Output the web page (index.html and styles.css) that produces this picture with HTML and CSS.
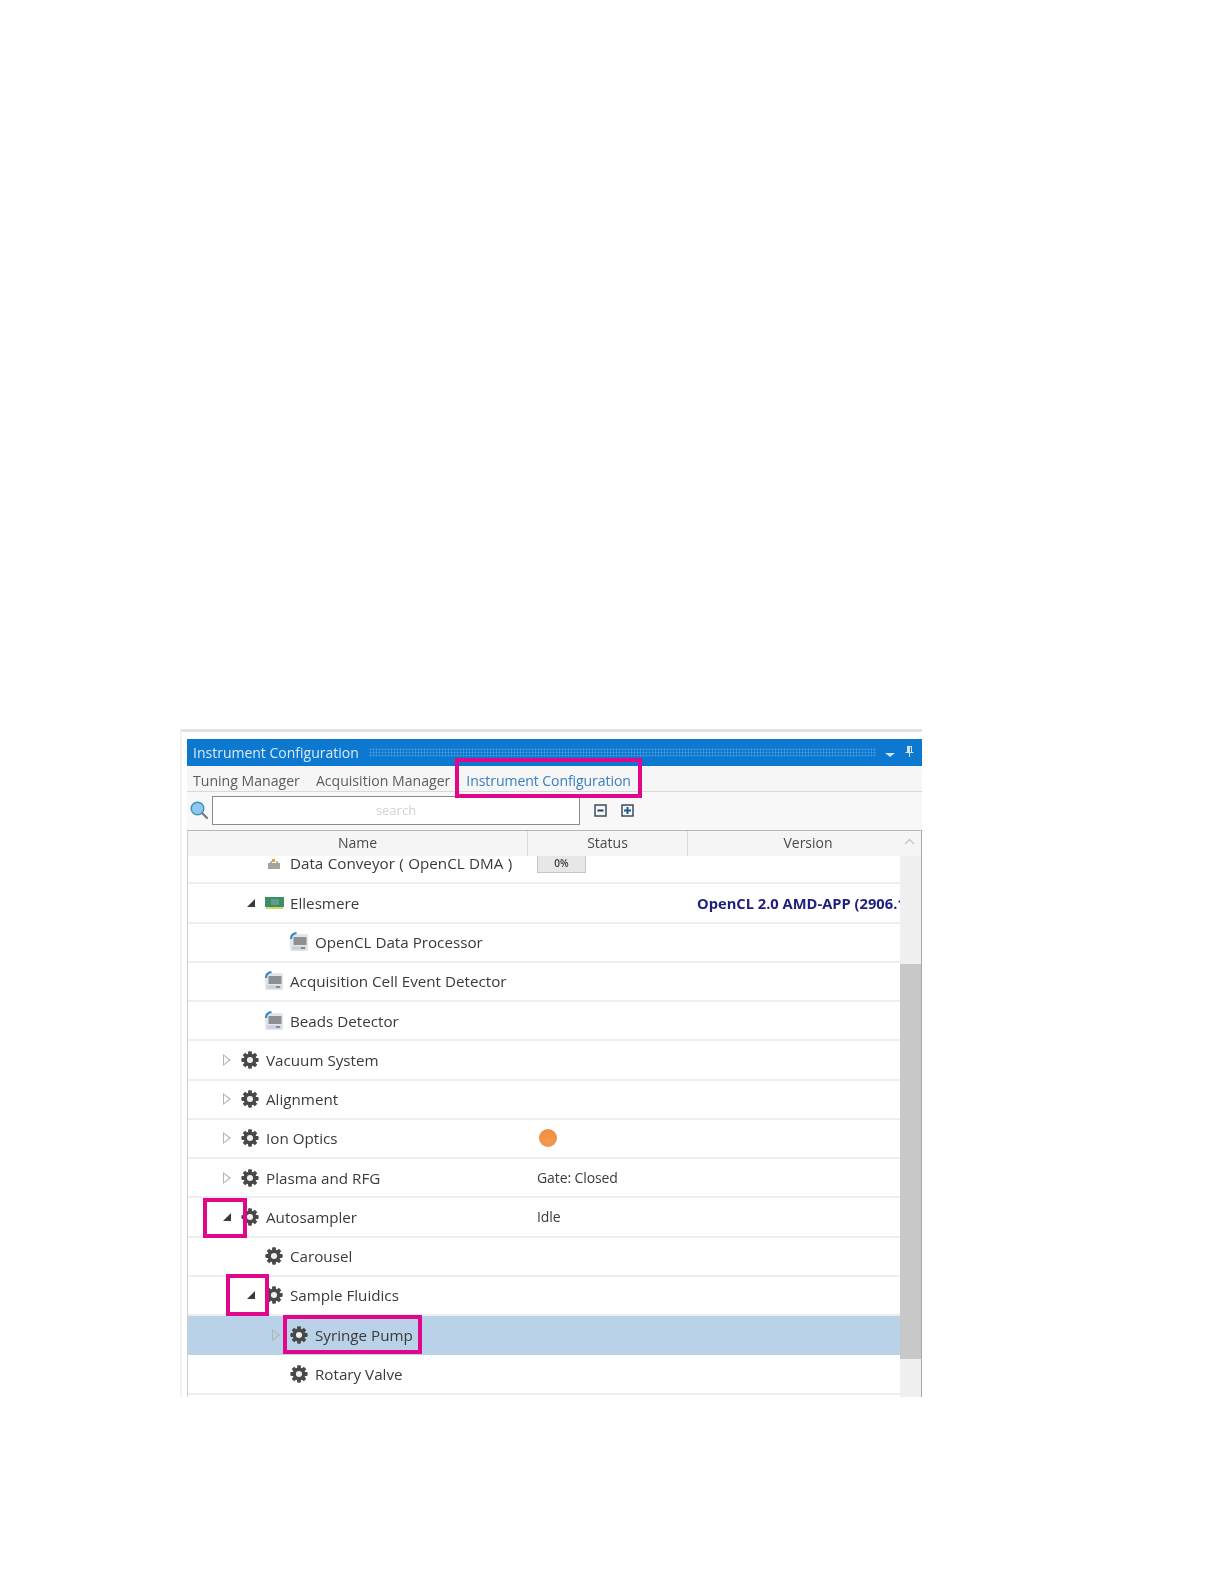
FILE: index.html
```html
<!DOCTYPE html>
<html lang="en">
<head>
<meta charset="utf-8">
<title>Instrument Configuration</title>
<link rel="stylesheet" href="styles.css">
</head>
<body>
<svg class="defs" width="0" height="0" aria-hidden="true">
  <symbol id="gear" viewBox="0 0 20 20">
    <g fill="#484848">
      <rect x="7.900" y="0.400" width="4.200" height="19.200" rx="0.900"/>
      <rect x="7.900" y="0.400" width="4.200" height="19.200" rx="0.900" transform="rotate(45 10 10)"/>
      <rect x="7.900" y="0.400" width="4.200" height="19.200" rx="0.900" transform="rotate(90 10 10)"/>
      <rect x="7.900" y="0.400" width="4.200" height="19.200" rx="0.900" transform="rotate(135 10 10)"/>
      <circle cx="10" cy="10" r="7.200"/>
    </g>
    <circle cx="10" cy="10" r="3.400" fill="#f0f0f0"/>
  </symbol>
  <symbol id="detector" viewBox="0 0 20 20">
    <rect x="1" y="2" width="18" height="17" rx="1.5" fill="#e2e6ea"/>
    <rect x="4.500" y="5" width="13" height="8" fill="#8d9093"/>
    <rect x="3" y="14.500" width="14" height="3" fill="#c3ced8"/>
    <rect x="12" y="15.200" width="4" height="1.600" fill="#6f7f8e"/>
    <path d="M2 7 C2 3.500 4 1.600 7.500 1" fill="none" stroke="#2c86c8" stroke-width="2"/>
  </symbol>
</svg>

<main class="frame">
  <section class="panel">
    <header class="titlebar">
      <span class="title">Instrument Configuration</span>
      <span class="grip"></span>
      <span class="caret-down"></span>
      <svg class="pin" width="9" height="12" viewBox="0 0 9 12"><path d="M2 1h5v6h1.500v1H5v4H4V8H.5V7H2z" fill="#cfe3f5"/><path d="M5 2h1v5H5z" fill="#0c78cf"/></svg>
    </header>

    <nav class="tabs">
      <span class="tab">Tuning Manager</span>
      <span class="tab">Acquisition Manager</span>
      <span class="tab tab-active">Instrument Configuration</span>
    </nav>

    <div class="toolbar">
      <svg class="search-icon" width="19" height="19" viewBox="0 0 19 19">
        <path d="M11.500 11.500l5.500 5.500" stroke="#777" stroke-width="2.200" stroke-linecap="round"/>
        <circle cx="7.500" cy="7.500" r="6.300" fill="#8cc8ee" stroke="#3d8fc4" stroke-width="1.400"/>
      </svg>
      <div class="search-box">search</div>
      <svg class="tool-icon" width="13" height="13" viewBox="0 0 13 13">
        <rect x="1" y="1" width="11" height="11" fill="#f4f6f8" stroke="#3f4a58" stroke-width="1.500"/>
        <path d="M3.500 6.500h6" stroke="#27405c" stroke-width="2"/>
      </svg>
      <svg class="tool-icon" width="13" height="13" viewBox="0 0 13 13">
        <rect x="1" y="1" width="11" height="11" fill="#f4f6f8" stroke="#3f4a58" stroke-width="1.500"/>
        <path d="M3 6.500h7M6.500 3v7" stroke="#1c5a94" stroke-width="2"/>
      </svg>
    </div>

    <div class="grid-wrap">
      <div class="grid-head">
        <div class="hcell hcell-name">Name</div>
        <div class="hcell hcell-status">Status</div>
        <div class="hcell hcell-version">Version</div>
        <svg class="chevron-up" width="11" height="7" viewBox="0 0 11 7"><path d="M1 6l4.500-4.500L10 6" fill="none" stroke="#c8c8c8" stroke-width="1.400"/></svg>
      </div>

      <div class="grid-body">
        <div class="tree">
          <div class="row row-cut">
            <div class="name level-1">
              <span class="arrow"></span>
              <span class="icon">
                <svg width="16" height="16" viewBox="0 0 16 16"><path d="M6 3h3v3H6z" fill="#d9a24f"/><path d="M2 7h12v6H2z" fill="#a9a29a"/><path d="M4 5h2v2H4zM10 5h2v2h-2z" fill="#c9b28e"/></svg>
              </span>
              <span class="label label-wide">Data Conveyor ( OpenCL DMA )</span>
            </div>
            <div class="status"><span class="progress">0%</span></div>
            <div class="version"></div>
          </div>

          <div class="row">
            <div class="name level-1">
              <span class="arrow"><span class="tri-open"></span></span>
              <span class="icon">
                <svg width="19" height="14" viewBox="0 0 19 14"><path d="M0 1h19v10H0z" fill="#3c8f63"/><path d="M6 3h8v6H6z" fill="#5f9c8e"/><path d="M1 11h17v2H1z" fill="#dcd35c"/></svg>
              </span>
              <span class="label">Ellesmere</span>
            </div>
            <div class="status"></div>
            <div class="version version-bold">OpenCL 2.0 AMD-APP (2906.10)</div>
          </div>

          <div class="row">
            <div class="name level-2">
              <span class="arrow"></span>
              <span class="icon"><svg width="20" height="20"><use href="#detector"/></svg></span>
              <span class="label">OpenCL Data Processor</span>
            </div>
            <div class="status"></div><div class="version"></div>
          </div>

          <div class="row">
            <div class="name level-1">
              <span class="arrow"></span>
              <span class="icon"><svg width="20" height="20"><use href="#detector"/></svg></span>
              <span class="label">Acquisition Cell Event Detector</span>
            </div>
            <div class="status"></div><div class="version"></div>
          </div>

          <div class="row">
            <div class="name level-1">
              <span class="arrow"></span>
              <span class="icon"><svg width="20" height="20"><use href="#detector"/></svg></span>
              <span class="label">Beads Detector</span>
            </div>
            <div class="status"></div><div class="version"></div>
          </div>

          <div class="row">
            <div class="name level-0">
              <span class="arrow"><span class="tri-closed"></span></span>
              <span class="icon"><svg width="18" height="18"><use href="#gear"/></svg></span>
              <span class="label">Vacuum System</span>
            </div>
            <div class="status"></div><div class="version"></div>
          </div>

          <div class="row">
            <div class="name level-0">
              <span class="arrow"><span class="tri-closed"></span></span>
              <span class="icon"><svg width="18" height="18"><use href="#gear"/></svg></span>
              <span class="label">Alignment</span>
            </div>
            <div class="status"></div><div class="version"></div>
          </div>

          <div class="row">
            <div class="name level-0">
              <span class="arrow"><span class="tri-closed"></span></span>
              <span class="icon"><svg width="18" height="18"><use href="#gear"/></svg></span>
              <span class="label">Ion Optics</span>
            </div>
            <div class="status"><span class="dot"></span></div><div class="version"></div>
          </div>

          <div class="row">
            <div class="name level-0">
              <span class="arrow"><span class="tri-closed"></span></span>
              <span class="icon"><svg width="18" height="18"><use href="#gear"/></svg></span>
              <span class="label">Plasma and RFG</span>
            </div>
            <div class="status">Gate: Closed</div><div class="version"></div>
          </div>

          <div class="row">
            <div class="name level-0">
              <span class="arrow"><span class="tri-open"></span></span>
              <span class="icon"><svg width="18" height="18"><use href="#gear"/></svg></span>
              <span class="label">Autosampler</span>
            </div>
            <div class="status">Idle</div><div class="version"></div>
          </div>

          <div class="row">
            <div class="name level-1">
              <span class="arrow"></span>
              <span class="icon"><svg width="18" height="18"><use href="#gear"/></svg></span>
              <span class="label">Carousel</span>
            </div>
            <div class="status"></div><div class="version"></div>
          </div>

          <div class="row">
            <div class="name level-1">
              <span class="arrow"><span class="tri-open"></span></span>
              <span class="icon"><svg width="18" height="18"><use href="#gear"/></svg></span>
              <span class="label">Sample Fluidics</span>
            </div>
            <div class="status"></div><div class="version"></div>
          </div>

          <div class="row row-selected">
            <div class="name level-2">
              <span class="arrow"><span class="tri-closed"></span></span>
              <span class="icon"><svg width="18" height="18"><use href="#gear"/></svg></span>
              <span class="label">Syringe Pump</span>
            </div>
            <div class="status"></div><div class="version"></div>
          </div>

          <div class="row">
            <div class="name level-2">
              <span class="arrow"></span>
              <span class="icon"><svg width="18" height="18"><use href="#gear"/></svg></span>
              <span class="label">Rotary Valve</span>
            </div>
            <div class="status"></div><div class="version"></div>
          </div>
        </div>
        <div class="scrollbar"><div class="thumb"></div></div>
      </div>
    </div>
  </section>

  <div class="mark mark-tab"></div>
  <div class="mark mark-auto"></div>
  <div class="mark mark-fluidics"></div>
  <div class="mark mark-syringe"></div>
</main>
</body>
</html>
```

FILE: styles.css
```css
* { box-sizing: border-box; }

html, body { margin: 0; padding: 0; background: #fff; }

body {
  height: 1584px;
  padding-top: 729px;
  padding-left: 180px;
  font-family: "Open Sans", "Noto Sans", sans-serif;
  color: #3a3a3a;
  overflow: hidden;
}

.defs { position: absolute; }

.frame {
  position: relative;
  width: 742px;
  height: 668px;
  padding: 7px 0 0 7px;
  border-top: 3px solid #e2e2e2;
  border-left: 2px solid #f1f1f1;
}

.panel {
  display: flex;
  flex-direction: column;
  height: 100%;
  margin-left: -2px;
  filter: blur(0.35px);
}

.titlebar {
  display: flex;
  align-items: center;
  flex: none;
  height: 27px;
  padding: 0 8px 0 6px;
  background: #0c78cf;
  color: #dbeaf7;
}

.title { font-size: 14px; white-space: nowrap; }

.grip {
  flex: 1;
  height: 9px;
  margin: 0 9px 0 10px;
  background-image: radial-gradient(#4a9bdd 0.9px, transparent 1.1px);
  background-size: 3px 3px;
}

.caret-down {
  width: 0;
  height: 0;
  margin: 4px 10px 0 0;
  border-left: 5px solid transparent;
  border-right: 5px solid transparent;
  border-top: 4px solid #cfe3f5;
}

.pin { flex: none; margin-top: -3px; }

.tabs {
  display: flex;
  align-items: center;
  flex: none;
  height: 26px;
  padding: 3px 0 0 6px;
  background: #f6f6f6;
  border-bottom: 1px solid #d9d9d9;
  font-size: 14.1px;
  color: #5d5d5d;
  white-space: nowrap;
}

.tab { margin-right: 16px; }

.tab-active { color: #3a7fc1; letter-spacing: -0.1px; }

.toolbar {
  display: flex;
  align-items: center;
  flex: none;
  height: 38px;
  padding-left: 3px;
  background: #f8f8f8;
}

.search-icon { flex: none; margin-right: 3px; margin-top: -1px; }

.search-box {
  width: 368px;
  height: 29px;
  margin: -1px 14px 0 0;
  background: #fff;
  border: 1px solid #8a8a8a;
  color: #d2d2d2;
  font-size: 13px;
  line-height: 27px;
  text-align: center;
}

.tool-icon { flex: none; margin: -1px 14px 0 0; }

.grid-wrap {
  display: flex;
  flex-direction: column;
  flex: 1;
  min-height: 0;
  border-top: 1px solid #b5b5b5;
  border-left: 1px solid #cfcfcf;
  border-right: 1px solid #a8a8a8;
  background: #fff;
}

.grid-head {
  position: relative;
  display: flex;
  flex: none;
  height: 25px;
  background: #f5f5f5;
  font-size: 14px;
  line-height: 24px;
  color: #4a4a4a;
  text-align: center;
}

.hcell-name { width: 340px; border-right: 1px solid #dcdcdc; }
.hcell-status { width: 160px; border-right: 1px solid #dcdcdc; }
.hcell-version { flex: 1; padding-left: 7px; }

.chevron-up { position: absolute; right: 6px; top: 7px; }

.grid-body {
  display: flex;
  flex: 1;
  min-height: 0;
}

.tree {
  flex: 1;
  min-width: 0;
  overflow: hidden;
}

.row {
  display: flex;
  align-items: center;
  height: 39.25px;
  border-bottom: 2px solid #eeeeee;
  font-size: 15.2px;
  white-space: nowrap;
}

.row-cut { margin-top: -11px; }

.row-selected { background: #b9d2e7; border-bottom-color: #b9d2e7; }

.name {
  display: flex;
  align-items: center;
  flex: none;
  width: 340px;
}

.level-0 { padding-left: 33px; }
.level-1 { padding-left: 57px; }
.level-2 { padding-left: 82px; }

.label-wide { margin-top: -1px; word-spacing: 0.5px; }

.arrow {
  display: flex;
  align-items: center;
  flex: none;
  width: 20px;
  height: 20px;
  padding-left: 2px;
}

.icon {
  display: flex;
  align-items: center;
  justify-content: center;
  flex: none;
  width: 24px;
  margin-left: -3px;
  margin-right: 4px;
}

.tri-closed {
  position: relative;
  width: 0;
  height: 0;
  border-top: 6px solid transparent;
  border-bottom: 6px solid transparent;
  border-left: 8px solid #b4b4b4;
}

.tri-closed::after {
  content: "";
  position: absolute;
  left: -7px;
  top: -4px;
  width: 0;
  height: 0;
  border-top: 4px solid transparent;
  border-bottom: 4px solid transparent;
  border-left: 5px solid #fff;
}

.row-selected .tri-closed::after { border-left-color: #b9d2e7; }

.tri-open {
  width: 0;
  height: 0;
  border-bottom: 8px solid #3a3a3a;
  border-left: 8px solid transparent;
}

.status {
  display: flex;
  align-items: center;
  flex: none;
  width: 160px;
  padding-left: 9px;
  font-size: 14px;
  letter-spacing: -0.1px;
}

.progress {
  display: block;
  width: 49px;
  height: 19px;
  background: #e7e7e7;
  border: 1px solid #c6c6c6;
  font-size: 10px;
  font-weight: 600;
  line-height: 17px;
  letter-spacing: 0;
  text-align: center;
}

.dot {
  display: block;
  width: 18px;
  height: 18px;
  margin-left: 2px;
  border-radius: 50%;
  background: radial-gradient(circle at 50% 65%, #f59a4e, #ea8a3f);
}

.version {
  flex: 1;
  min-width: 0;
  padding-left: 9px;
  overflow: hidden;
}

.version-bold {
  font-weight: 700;
  font-size: 14.7px;
  color: #1f1f80;
}

.scrollbar {
  flex: none;
  width: 21px;
  margin-top: -25px;
  padding-top: 133px;
  background: linear-gradient(#f5f5f5 25px, #f0f0f0 25px);
}

.thumb {
  height: 395px;
  background: #c8c8c8;
}

.mark {
  position: absolute;
  border: 4px solid #e0078d;
}

.mark-tab { left: 273px; top: 26px; width: 187px; height: 40px; }
.mark-auto { left: 21px; top: 466px; width: 44px; height: 40px; }
.mark-fluidics { left: 44px; top: 542px; width: 43px; height: 42px; }
.mark-syringe { left: 101px; top: 583px; width: 139px; height: 39px; }
```
